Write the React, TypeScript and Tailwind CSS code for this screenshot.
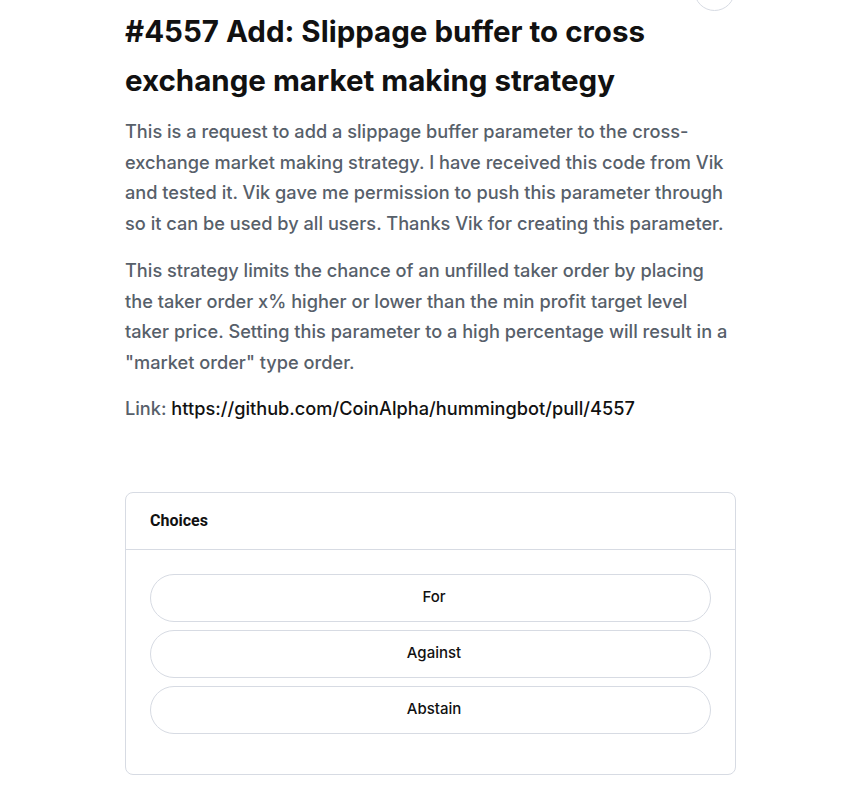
import React from "react";

export default function App() {
  const font = { fontFamily: "Inter, 'Noto Sans', sans-serif" };
  return (
    <div className="min-h-[798px] w-[857px] bg-white relative overflow-hidden" style={font}>
      <div className="absolute left-[694px] top-[-30px] w-[41px] h-[41px] rounded-full border border-[#d7dbe3] bg-white" />
      <div className="ml-[125px] w-[611px] pt-[7px]">
        <h1 className="text-[29.5px] leading-[49px] font-bold text-[#111111]">
          #4557 Add: Slippage buffer to cross
          <br />
          exchange market making strategy
        </h1>
        <div className="mt-[11px] text-[18.2px] leading-[30.5px] font-medium text-[#57606a]">
          <p>
            This is a request to add a slippage buffer parameter to the cross-
            <br />
            exchange market making strategy. I have received this code from Vik
            <br />
            and tested it. Vik gave me permission to push this parameter through
            <br />
            so it can be used by all users. Thanks Vik for creating this parameter.
          </p>
          <p className="mt-[17px]">
            This strategy limits the chance of an unfilled taker order by placing
            <br />
            the taker order x% higher or lower than the min profit target level
            <br />
            taker price. Setting this parameter to a high percentage will result in a
            <br />
            "market order" type order.
          </p>
          <p className="mt-[16px]">
            Link: <span className="text-[#111111]">https://github.com/CoinAlpha/hummingbot/pull/4557</span>
          </p>
        </div>
        <div className="mt-[68px] rounded-[8px] border border-[#d7dbe3]">
          <div className="h-[57px] flex items-center px-[24px] border-b border-[#d7dbe3]">
            <span className="text-[16px] font-bold text-[#111111]" style={{ fontFamily: "Roboto, sans-serif" }}>Choices</span>
          </div>
          <div className="px-[24px] pt-[24px] pb-[40px] flex flex-col gap-[8px]">
            {["For", "Against", "Abstain"].map((c) => (
              <div
                key={c}
                className="h-[48px] pl-[7px] rounded-full border border-[#d7dbe3] flex items-center justify-center text-[15px] font-medium text-[#111111]"
              >
                {c}
              </div>
            ))}
          </div>
        </div>
      </div>
    </div>
  );
}
